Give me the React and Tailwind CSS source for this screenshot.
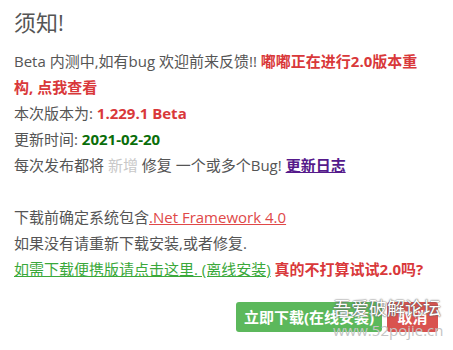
import React from 'react';

const App = () => {
    return (
        <div
            lang="zh-CN"
            className="relative w-[453px] h-[350px] bg-white overflow-hidden text-[#555]"
            style={{ fontFamily: '"Open Sans", "Noto Sans CJK SC", sans-serif' }}
        >
            <div className="pl-[14px] pr-[20px] pt-[6px]">
                <h1 className="text-[22px] leading-[32px] font-normal text-[#555]">须知!</h1>

                <div className="mt-[10px] text-[15px] leading-[26px]">
                    <p>
                        Beta 内测中,如有bug 欢迎前来反馈!!{' '}
                        <a className="font-bold text-[#d9383a] cursor-pointer">嘟嘟正在进行2.0版本重构, 点我查看</a>
                    </p>
                    <p>
                        本次版本为: <span className="font-bold text-[#d9383a]">1.229.1 Beta</span>
                    </p>
                    <p>
                        更新时间: <span className="font-bold text-[#0a6e0a]">2021-02-20</span>
                    </p>
                    <p>
                        每次发布都将 <span className="text-[#c8c8c8]">新增</span> 修复 一个或多个Bug!{' '}
                        <a className="font-bold text-[#551a8b] underline cursor-pointer">更新日志</a>
                    </p>
                    <p className="h-[26px]"></p>
                    <p>
                        下载前确定系统包含<a className="text-[#e04848] underline cursor-pointer">.Net Framework 4.0</a>
                    </p>
                    <p>如果没有请重新下载安装,或者修复.</p>
                    <p className="whitespace-nowrap">
                        <a className="text-[#3aa83a] underline cursor-pointer">如需下载便携版请点击这里. (离线安装)</a>{' '}
                        <span className="font-bold text-[#d9383a]">真的不打算试试2.0吗?</span>
                    </p>
                </div>

                <div className="mt-[20px] flex justify-end gap-[5px] -mr-[5px]">
                    <button className="h-[30px] w-[146px] rounded-[3px] bg-[#5cb85c] text-white text-[15px] font-bold whitespace-nowrap">
                        立即下载(在线安装)
                    </button>
                    <button className="h-[30px] w-[51px] rounded-[3px] bg-[#d9534f] text-white text-[15px] font-bold">
                        取消
                    </button>
                </div>
            </div>

            {/* forum watermark */}
            <div className="absolute left-[333px] top-[299px] pointer-events-none leading-none whitespace-nowrap">
                <div
                    className="text-[18px] text-white"
                    style={{ textShadow: '0 0 2px #666, 0 0 1px #444' }}
                >
                    吾爱破解论坛
                </div>
                <div className="mt-[6px] text-[15px] text-[#c4c4c4]">www.52pojie.cn</div>
            </div>
        </div>
    );
};

export default App;
